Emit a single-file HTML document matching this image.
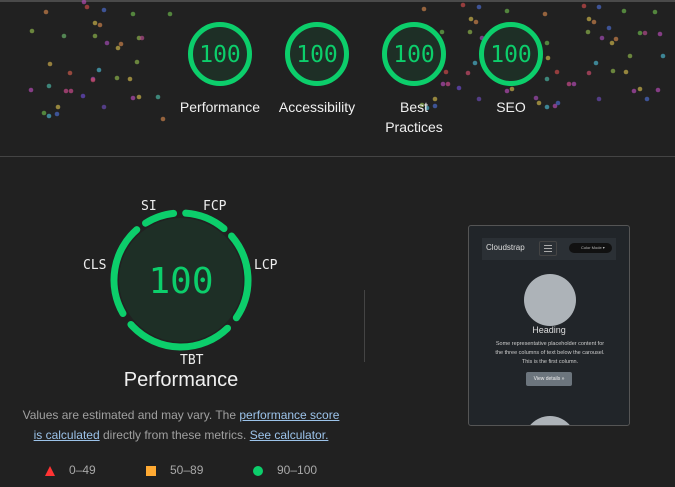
<!DOCTYPE html>
<html><head><meta charset="utf-8"><style>
*{margin:0;padding:0;box-sizing:border-box}
body{width:675px;height:487px;background:#212121;overflow:hidden;position:relative;font-family:"Liberation Sans",sans-serif;color:#fff}
.lbl{position:absolute;font-size:14px;color:#f0f0f0;text-align:center;width:100px;line-height:20px}
.ml{position:absolute;font-size:13px;color:#eee;font-family:"DejaVu Sans Mono","Liberation Mono",monospace}
a{color:#9cc3ea;text-decoration:underline}
</style></head><body>
<div style="position:absolute;left:0;top:0;width:675px;height:2px;background:#4a4a4a"></div>
<div style="position:absolute;left:0;top:156px;width:675px;height:1px;background:#444"></div>
<svg width="675" height="160" style="position:absolute;left:0;top:0">
<g fill-opacity="0.7">
<circle cx="46" cy="12" r="2.3" fill="#c8804a"/><circle cx="32" cy="31" r="2.3" fill="#8ab04a"/><circle cx="64" cy="36" r="2.3" fill="#6ab06a"/><circle cx="50" cy="64" r="2.3" fill="#c8a84a"/><circle cx="49" cy="86" r="2.3" fill="#4ab0a0"/><circle cx="31" cy="90" r="2.3" fill="#b04ab0"/><circle cx="70" cy="73" r="2.3" fill="#c85a4a"/><circle cx="93" cy="79" r="2.3" fill="#a04ab0"/><circle cx="66" cy="91" r="2.3" fill="#c84a8a"/><circle cx="71" cy="91" r="2.3" fill="#c84a8a"/><circle cx="44" cy="113" r="2.3" fill="#6ab04a"/><circle cx="49" cy="116" r="2.3" fill="#4ab0c8"/><circle cx="58" cy="107" r="2.3" fill="#c8b04a"/><circle cx="57" cy="114" r="2.3" fill="#4a6ac8"/><circle cx="83" cy="96" r="2.3" fill="#6a4ac8"/><circle cx="87" cy="7" r="2.3" fill="#c84a4a"/><circle cx="104" cy="10" r="2.3" fill="#4a6ac8"/><circle cx="95" cy="23" r="2.3" fill="#c8b04a"/><circle cx="100" cy="25" r="2.3" fill="#c8804a"/><circle cx="95" cy="36" r="2.3" fill="#8ab04a"/><circle cx="107" cy="43" r="2.3" fill="#a04ab0"/><circle cx="118" cy="48" r="2.3" fill="#c8b04a"/><circle cx="121" cy="44" r="2.3" fill="#c8804a"/><circle cx="133" cy="14" r="2.3" fill="#6ab04a"/><circle cx="99" cy="70" r="2.3" fill="#4ab0c8"/><circle cx="93" cy="80" r="2.3" fill="#c84a6a"/><circle cx="117" cy="78" r="2.3" fill="#8ab04a"/><circle cx="130" cy="79" r="2.3" fill="#c8b04a"/><circle cx="137" cy="62" r="2.3" fill="#8ab04a"/><circle cx="104" cy="107" r="2.3" fill="#6a4ab0"/><circle cx="133" cy="98" r="2.3" fill="#b04ab0"/><circle cx="139" cy="97" r="2.3" fill="#c8b04a"/><circle cx="163" cy="119" r="2.3" fill="#c8804a"/><circle cx="158" cy="97" r="2.3" fill="#4ab0a0"/><circle cx="139" cy="38" r="2.3" fill="#8ab04a"/><circle cx="142" cy="38" r="2.3" fill="#b04a8a"/><circle cx="170" cy="14" r="2.3" fill="#6ab04a"/><circle cx="84" cy="2" r="2.3" fill="#b04ab0"/>
<circle cx="424" cy="9" r="2.3" fill="#c8804a"/><circle cx="442" cy="32" r="2.3" fill="#6ab04a"/><circle cx="428" cy="59" r="2.3" fill="#c8b04a"/><circle cx="427" cy="79" r="2.3" fill="#4ab0a0"/><circle cx="411" cy="83" r="2.3" fill="#a04ab0"/><circle cx="446" cy="72" r="2.3" fill="#c84a4a"/><circle cx="443" cy="84" r="2.3" fill="#b04ab0"/><circle cx="448" cy="84" r="2.3" fill="#c84a8a"/><circle cx="422" cy="105" r="2.3" fill="#8ab04a"/><circle cx="427" cy="108" r="2.3" fill="#4ab0c8"/><circle cx="435" cy="99" r="2.3" fill="#c8b04a"/><circle cx="435" cy="106" r="2.3" fill="#4a6ac8"/><circle cx="459" cy="88" r="2.3" fill="#6a4ac8"/><circle cx="463" cy="5" r="2.3" fill="#c84a4a"/><circle cx="479" cy="7" r="2.3" fill="#4a6ac8"/><circle cx="471" cy="19" r="2.3" fill="#c8b04a"/><circle cx="476" cy="22" r="2.3" fill="#c8804a"/><circle cx="470" cy="32" r="2.3" fill="#8ab04a"/><circle cx="482" cy="38" r="2.3" fill="#a04ab0"/><circle cx="492" cy="43" r="2.3" fill="#c8b04a"/><circle cx="495" cy="39" r="2.3" fill="#c8804a"/><circle cx="507" cy="11" r="2.3" fill="#6ab04a"/><circle cx="475" cy="63" r="2.3" fill="#4ab0c8"/><circle cx="468" cy="73" r="2.3" fill="#c84a6a"/><circle cx="491" cy="71" r="2.3" fill="#8ab04a"/><circle cx="504" cy="72" r="2.3" fill="#c8b04a"/><circle cx="509" cy="56" r="2.3" fill="#8ab04a"/><circle cx="479" cy="99" r="2.3" fill="#6a4ab0"/><circle cx="507" cy="91" r="2.3" fill="#b04ab0"/><circle cx="512" cy="89" r="2.3" fill="#c8b04a"/><circle cx="512" cy="33" r="2.3" fill="#6ab04a"/><circle cx="515" cy="33" r="2.3" fill="#b04a8a"/>
<circle cx="545" cy="14" r="2.3" fill="#c8804a"/><circle cx="547" cy="43" r="2.3" fill="#6ab04a"/><circle cx="548" cy="58" r="2.3" fill="#c8b04a"/><circle cx="547" cy="79" r="2.3" fill="#4ab0a0"/><circle cx="536" cy="98" r="2.3" fill="#a04ab0"/><circle cx="557" cy="72" r="2.3" fill="#c84a4a"/><circle cx="555" cy="106" r="2.3" fill="#b04ab0"/><circle cx="539" cy="103" r="2.3" fill="#c8b04a"/><circle cx="547" cy="107" r="2.3" fill="#4ab0c8"/><circle cx="558" cy="103" r="2.3" fill="#4a6ac8"/><circle cx="569" cy="84" r="2.3" fill="#c84a8a"/><circle cx="574" cy="84" r="2.3" fill="#b04ab0"/><circle cx="584" cy="6" r="2.3" fill="#c84a4a"/><circle cx="599" cy="7" r="2.3" fill="#4a6ac8"/><circle cx="589" cy="19" r="2.3" fill="#c8b04a"/><circle cx="594" cy="22" r="2.3" fill="#c8804a"/><circle cx="588" cy="32" r="2.3" fill="#8ab04a"/><circle cx="602" cy="38" r="2.3" fill="#a04ab0"/><circle cx="612" cy="43" r="2.3" fill="#c8b04a"/><circle cx="616" cy="39" r="2.3" fill="#c8804a"/><circle cx="624" cy="11" r="2.3" fill="#6ab04a"/><circle cx="596" cy="63" r="2.3" fill="#4ab0c8"/><circle cx="589" cy="73" r="2.3" fill="#c84a6a"/><circle cx="613" cy="71" r="2.3" fill="#8ab04a"/><circle cx="626" cy="72" r="2.3" fill="#c8b04a"/><circle cx="630" cy="56" r="2.3" fill="#8ab04a"/><circle cx="599" cy="99" r="2.3" fill="#6a4ab0"/><circle cx="634" cy="91" r="2.3" fill="#b04ab0"/><circle cx="640" cy="89" r="2.3" fill="#c8b04a"/><circle cx="640" cy="33" r="2.3" fill="#6ab04a"/><circle cx="645" cy="33" r="2.3" fill="#b04a8a"/><circle cx="655" cy="12" r="2.3" fill="#6ab04a"/><circle cx="660" cy="34" r="2.3" fill="#b04ab0"/><circle cx="658" cy="90" r="2.3" fill="#b04ab0"/><circle cx="663" cy="56" r="2.3" fill="#4ab0c8"/><circle cx="609" cy="28" r="2.3" fill="#4a6ac8"/><circle cx="647" cy="99" r="2.3" fill="#4a6ac8"/>
</g>
<g fill="#1e2f26" stroke="#0cce6b" stroke-width="5">
<circle cx="220" cy="54" r="29.5"/><circle cx="317" cy="54" r="29.5"/><circle cx="414" cy="54" r="29.5"/><circle cx="511" cy="54" r="29.5"/>
</g>
<g fill="#0cce6b" font-family="DejaVu Sans Mono,Liberation Mono,monospace" font-size="23" text-anchor="middle">
<text x="220" y="62">100</text><text x="317" y="62">100</text><text x="414" y="62">100</text><text x="511" y="62">100</text>
</g>
</svg>
<div class="lbl" style="left:170px;top:97px">Performance</div>
<div class="lbl" style="left:267px;top:97px">Accessibility</div>
<div class="lbl" style="left:364px;top:97px">Best<br>Practices</div>
<div class="lbl" style="left:461px;top:97px">SEO</div>

<svg width="200" height="200" style="position:absolute;left:81px;top:180px">
<circle cx="100" cy="100" r="62" fill="#1e2f26"/>
<g fill="none" stroke="#0cce6b" stroke-width="7" stroke-linecap="round">
<circle cx="100" cy="100" r="67" stroke-dasharray="42 999" transform="rotate(-86 100 100)"/>
<circle cx="100" cy="100" r="67" stroke-dasharray="88 999" transform="rotate(-41 100 100)"/>
<circle cx="100" cy="100" r="67" stroke-dasharray="108 999" transform="rotate(46 100 100)"/>
<circle cx="100" cy="100" r="67" stroke-dasharray="92 999" transform="rotate(150 100 100)"/>
<circle cx="100" cy="100" r="67" stroke-dasharray="30 999" transform="rotate(238 100 100)"/>
</g>
<text x="100" y="113" fill="#0cce6b" font-family="DejaVu Sans Mono,Liberation Mono,monospace" font-size="36" text-anchor="middle">100</text>
</svg>
<div class="ml" style="left:141px;top:199px">SI</div>
<div class="ml" style="left:203px;top:199px">FCP</div>
<div class="ml" style="left:254px;top:258px">LCP</div>
<div class="ml" style="left:83px;top:258px">CLS</div>
<div class="ml" style="left:180px;top:353px">TBT</div>
<div style="position:absolute;left:81px;top:369px;width:200px;text-align:center;font-size:20px;color:#f0f0f0">Performance</div>
<div style="position:absolute;left:20px;top:405px;width:322px;text-align:center;font-size:12px;line-height:20px;color:#a0a0a0">Values are estimated and may vary. The <a>performance score is calculated</a> directly from these metrics. <a>See calculator.</a></div>
<svg width="12" height="12" style="position:absolute;left:44px;top:465px"><polygon points="6,1 11,11 1,11" fill="#ff3333"/></svg>
<div style="position:absolute;left:69px;top:463px;font-size:12px;color:#a8a8a8">0–49</div>
<div style="position:absolute;left:146px;top:466px;width:10px;height:10px;background:#ffaa33"></div>
<div style="position:absolute;left:170px;top:463px;font-size:12px;color:#a8a8a8">50–89</div>
<div style="position:absolute;left:253px;top:466px;width:10px;height:10px;border-radius:50%;background:#0cce6b"></div>
<div style="position:absolute;left:277px;top:463px;font-size:12px;color:#a8a8a8">90–100</div>

<div style="position:absolute;left:364px;top:290px;width:1px;height:72px;background:#444"></div>
<div style="position:absolute;left:468px;top:225px;width:162px;height:201px;border:1px solid #555;border-radius:3px;background:#212529;overflow:hidden">
<div style="position:absolute;left:13px;top:12px;width:134px;height:22px;background:#2b3035"></div>
<div style="position:absolute;left:17px;top:17px;font-size:8px;color:#ddd">Cloudstrap</div>
<div style="position:absolute;left:70px;top:15px;width:18px;height:15px;border:1px solid #444;border-radius:2px"></div>
<div style="position:absolute;left:75px;top:19px;width:8px;height:1px;background:#aaa;box-shadow:0 3px #aaa,0 6px #aaa"></div>
<div style="position:absolute;left:100px;top:17px;width:43px;height:10px;border-radius:5px;background:#111;font-size:4px;color:#bbb;line-height:10px;padding-left:12px">Color Mode ▾</div>
<div style="position:absolute;left:55px;top:48px;width:52px;height:52px;border-radius:50%;background:#adb3b8"></div>
<div style="position:absolute;left:0;top:99px;width:160px;text-align:center;font-size:9px;color:#ddd">Heading</div>
<div style="position:absolute;left:26px;top:114px;width:110px;text-align:center;font-size:5.5px;line-height:9px;color:#ccc">Some representative placeholder content for the three columns of text below the carousel. This is the first column.</div>
<div style="position:absolute;left:57px;top:146px;width:46px;height:14px;border-radius:2px;background:#6c757d;font-size:5px;color:#eee;text-align:center;line-height:14px">View details »</div>
<div style="position:absolute;left:55px;top:190px;width:52px;height:52px;border-radius:50%;background:#adb3b8"></div>
</div>
</body></html>
